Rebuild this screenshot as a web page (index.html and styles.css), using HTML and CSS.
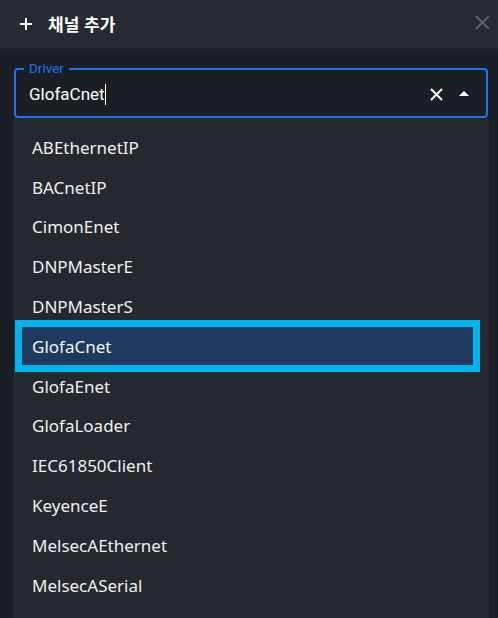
FILE: index.html
```html
<!DOCTYPE html>
<html lang="ko">
<head>
<meta charset="utf-8">
<title>채널 추가</title>
<link rel="stylesheet" href="styles.css">
</head>
<body>
<div class="dialog">
  <header class="header">
    <svg class="plus" width="14" height="14" viewBox="0 0 14 14"><path d="M7 1v12M1 7h12" stroke="#fff" stroke-width="2" fill="none"/></svg>
    <span class="title">채널 추가</span>
    <svg class="close" width="15" height="15" viewBox="0 0 15 15"><path d="M1 1l13 13M14 1L1 14" stroke="#5b6272" stroke-width="2" fill="none"/></svg>
  </header>
  <div class="content">
    <div class="field">
      <span class="label">Driver</span>
      <span class="value">GlofaCnet<span class="caret"></span></span>
      <svg class="clear" width="13" height="13" viewBox="0 0 13 13"><path d="M1 1l11 11M12 1L1 12" stroke="#fff" stroke-width="2" fill="none"/></svg>
      <svg class="arrow" width="10" height="5" viewBox="0 0 10 5"><path d="M0 5L5 0L10 5Z" fill="#fff"/></svg>
    </div>
    <ul class="menu">
      <li class="item">ABEthernetIP</li>
      <li class="item">BACnetIP</li>
      <li class="item">CimonEnet</li>
      <li class="item">DNPMasterE</li>
      <li class="item">DNPMasterS</li>
      <li class="item selected">GlofaCnet</li>
      <li class="item">GlofaEnet</li>
      <li class="item">GlofaLoader</li>
      <li class="item">IEC61850Client</li>
      <li class="item">KeyenceE</li>
      <li class="item">MelsecAEthernet</li>
      <li class="item">MelsecASerial</li>
      <li class="item">MelsecQEthernet</li>
    </ul>
  </div>
</div>
</body>
</html>
```
FILE: styles.css
```css
* { box-sizing: border-box; }
html, body { margin: 0; padding: 0; }
body {
  width: 498px;
  height: 618px;
  overflow: hidden;
  background: #1b1e24;
  font-family: "Noto Sans", Roboto, sans-serif;
}
.dialog { display: flex; flex-direction: column; }
.header {
  height: 50px;
  background: #262a33;
  border-bottom: 2px solid #1f2329;
  display: flex;
  align-items: center;
  padding: 0 8px 0 19px;
}
.plus { flex: none; margin-top: -1px; }
.title {
  margin-left: 15px;
  color: #fff;
  font-family: "Noto Sans CJK KR", "Noto Sans", sans-serif;
  font-weight: 700;
  font-size: 17px;
  flex: 1;
  margin-top: -2px;
}
.close { flex: none; margin-top: -3px; }
.content { padding: 18px 10px 0 14px; }
.field {
  position: relative;
  height: 50px;
  border: 2px solid #1976ee;
  border-radius: 4px;
  display: flex;
  align-items: center;
  padding: 0 17px 0 13px;
}
.label {
  position: absolute;
  left: 8px;
  top: -10px;
  padding: 0 5px;
  background: #1b1e24;
  color: #1976ee;
  font-family: Roboto, sans-serif;
  font-size: 13.5px;
  line-height: 16px;
}
.value {
  flex: 1;
  color: #fff;
  font-family: Roboto, sans-serif;
  font-size: 17px;
  display: flex;
  align-items: center;
  margin-top: 2px;
}
.caret {
  display: inline-block;
  width: 1px;
  height: 21px;
  background: #fff;
}
.clear { flex: none; margin-top: 2px; }
.arrow { flex: none; margin-left: 16px; margin-top: 1px; }
.menu {
  list-style: none;
  margin: 0 -1px 0 0;
  padding: 9.5px 0 0;
  background: #25282f;
  border-left: 1px solid #2c3038;
}
.item {
  height: 39.8px;
  display: flex;
  align-items: center;
  padding-left: 17px;
  color: #f0f0f0;
  font-size: 17px;
}
.item.selected {
  height: 51.8px;
  margin: -6px 9px -6px 0;
  border: 7px solid #00b4f0;
  background: #1e3a5f;
  padding-left: 10px;
  color: #f4f4f4;
}
```
